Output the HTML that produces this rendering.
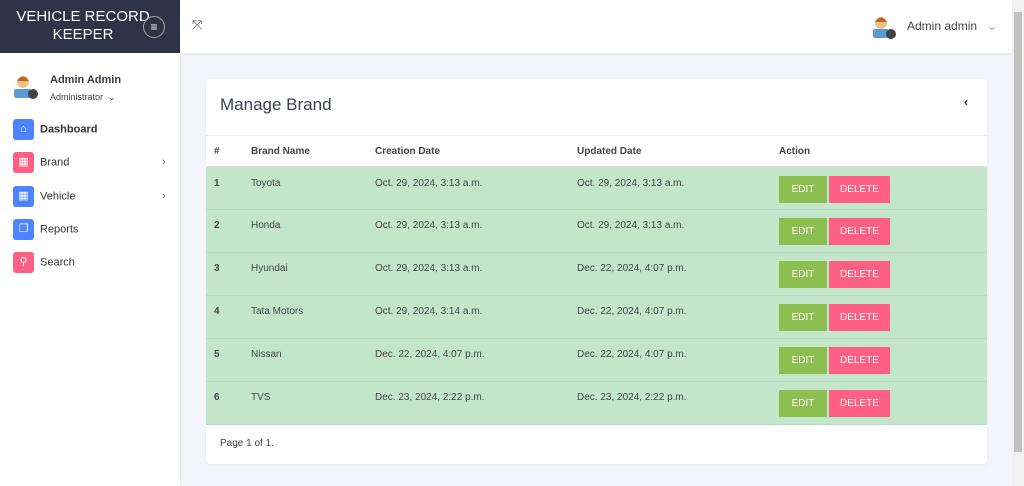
<!DOCTYPE html>
<html><head><style>
*{box-sizing:border-box;margin:0;padding:0}
body{width:1024px;height:486px;overflow:hidden;font-family:"Liberation Sans",sans-serif;background:#f4f5fa;position:relative;color:#343a40}
.logo{position:absolute;left:0;top:0;width:180px;height:53px;background:#2f3347;color:#fff;text-align:center;font-size:15px;line-height:18px;padding-top:8px;padding-right:14px}
.tog{position:absolute;left:143px;top:16px;width:22px;height:22px;border:1px solid #aaa;border-radius:50%;color:#fff;font-size:12px;line-height:20px;text-align:center}
.top{position:absolute;left:180px;top:0;width:832px;height:53px;background:#fff;box-shadow:0 1px 4px rgba(0,0,0,.08)}
.side{position:absolute;left:0;top:53px;width:180px;height:433px;background:#fff;box-shadow:1px 0 3px rgba(0,0,0,.06)}
.scroll{position:absolute;left:1012px;top:0;width:12px;height:486px;background:#f1f1f1}
.scroll div{position:absolute;left:2px;top:12px;width:8px;height:440px;background:#c1c1c1}
.nav{position:absolute;left:13px;font-size:11px;color:#333}
.nav i{display:inline-block;width:21px;height:21px;border-radius:3px;vertical-align:middle;margin-right:6px;position:relative;color:#fff;font-style:normal;font-size:11px;text-align:center;line-height:21px}
.card{position:absolute;left:206px;top:79px;width:781px;height:385px;background:#fff;border-radius:4px;box-shadow:0 1px 3px rgba(0,0,0,.06)}
table{position:absolute;left:0;top:56px;width:781px;border-collapse:collapse;font-size:10px;color:#444;table-layout:fixed}
th{text-align:left;font-weight:bold;height:31px;border-top:1px solid #eee;border-bottom:2px solid #ddd;color:#444;padding-top:2px}
td{background:#c3e6cb;height:43px;vertical-align:top;padding-top:10px;border-bottom:1px solid #b5dcbf}
.b{display:inline-block;height:27px;line-height:27px;color:#fff;font-size:10px;text-align:center;margin-top:-2px}
.e{width:48px;background:#8cbf4f}.d{width:61px;background:#fe5f82;margin-left:2px}
</style></head><body>
<div class="logo">VEHICLE RECORD<br>KEEPER</div><div class="tog">≡</div>
<div class="top"><span style="position:absolute;left:12px;top:17px;font-size:13px;color:#555">⤧</span>
<svg style="position:absolute;left:690px;top:14px" width="28" height="26"><circle cx="11" cy="9" r="6" fill="#f1c27d"/><path d="M5 8q6-9 12 0" fill="#c0622a"/><rect x="3" y="15" width="16" height="9" rx="2" fill="#5b9bd5"/><circle cx="21" cy="20" r="5" fill="#444"/></svg>
<span style="position:absolute;left:727px;top:19px;font-size:12px;color:#444">Admin admin &nbsp; <span style="color:#999">⌄</span></span></div>
<div class="side">
<svg style="position:absolute;left:12px;top:19px" width="28" height="30"><circle cx="11" cy="10" r="6" fill="#f1c27d"/><path d="M5 9q6-9 12 0" fill="#c0622a"/><rect x="2" y="17" width="17" height="9" rx="2" fill="#5b9bd5"/><circle cx="21" cy="22" r="5" fill="#444"/></svg>
<div style="position:absolute;left:50px;top:21px;font-size:11px;font-weight:bold">Admin Admin</div>
<div style="position:absolute;left:50px;top:39px;font-size:9px;color:#444">Administrator &nbsp;⌄</div>
</div>
<div class="nav" style="top:119px;font-weight:bold"><i style="background:#4c84ff">⌂</i>Dashboard</div>
<div class="nav" style="top:152px"><i style="background:#fe5f82">▦</i>Brand<span style="position:absolute;left:149px;top:4px;color:#666">›</span></div>
<div class="nav" style="top:186px"><i style="background:#4c84ff">▦</i>Vehicle<span style="position:absolute;left:149px;top:4px;color:#666">›</span></div>
<div class="nav" style="top:219px"><i style="background:#4c84ff">❐</i>Reports</div>
<div class="nav" style="top:252px"><i style="background:#fe5f82">⚲</i>Search</div>
<div class="card">
<div style="position:absolute;left:14px;top:16px;font-size:17px;color:#3c4150">Manage Brand</div>
<div style="position:absolute;left:758px;top:16px;font-size:12px;font-weight:bold">‹</div>
<table>
<colgroup><col style="width:45px"><col style="width:124px"><col style="width:202px"><col style="width:202px"><col></colgroup>
<tr><th style="padding-left:8px">#</th><th>Brand Name</th><th>Creation Date</th><th>Updated Date</th><th>Action</th></tr>
<tr><td style="padding-left:8px"><b>1</b></td><td>Toyota</td><td>Oct. 29, 2024, 3:13 a.m.</td><td>Oct. 29, 2024, 3:13 a.m.</td><td><span class="b e">EDIT</span><span class="b d">DELETE</span></td></tr>
<tr><td style="padding-left:8px"><b>2</b></td><td>Honda</td><td>Oct. 29, 2024, 3:13 a.m.</td><td>Oct. 29, 2024, 3:13 a.m.</td><td><span class="b e">EDIT</span><span class="b d">DELETE</span></td></tr>
<tr><td style="padding-left:8px"><b>3</b></td><td>Hyundai</td><td>Oct. 29, 2024, 3:13 a.m.</td><td>Dec. 22, 2024, 4:07 p.m.</td><td><span class="b e">EDIT</span><span class="b d">DELETE</span></td></tr>
<tr><td style="padding-left:8px"><b>4</b></td><td>Tata Motors</td><td>Oct. 29, 2024, 3:14 a.m.</td><td>Dec. 22, 2024, 4:07 p.m.</td><td><span class="b e">EDIT</span><span class="b d">DELETE</span></td></tr>
<tr><td style="padding-left:8px"><b>5</b></td><td>Nissan</td><td>Dec. 22, 2024, 4:07 p.m.</td><td>Dec. 22, 2024, 4:07 p.m.</td><td><span class="b e">EDIT</span><span class="b d">DELETE</span></td></tr>
<tr><td style="padding-left:8px"><b>6</b></td><td>TVS</td><td>Dec. 23, 2024, 2:22 p.m.</td><td>Dec. 23, 2024, 2:22 p.m.</td><td><span class="b e">EDIT</span><span class="b d">DELETE</span></td></tr>
</table>
<div style="position:absolute;left:14px;top:359px;font-size:10px;color:#444">Page 1 of 1.</div>
</div>
<div class="scroll"><div></div></div>
</body></html>
